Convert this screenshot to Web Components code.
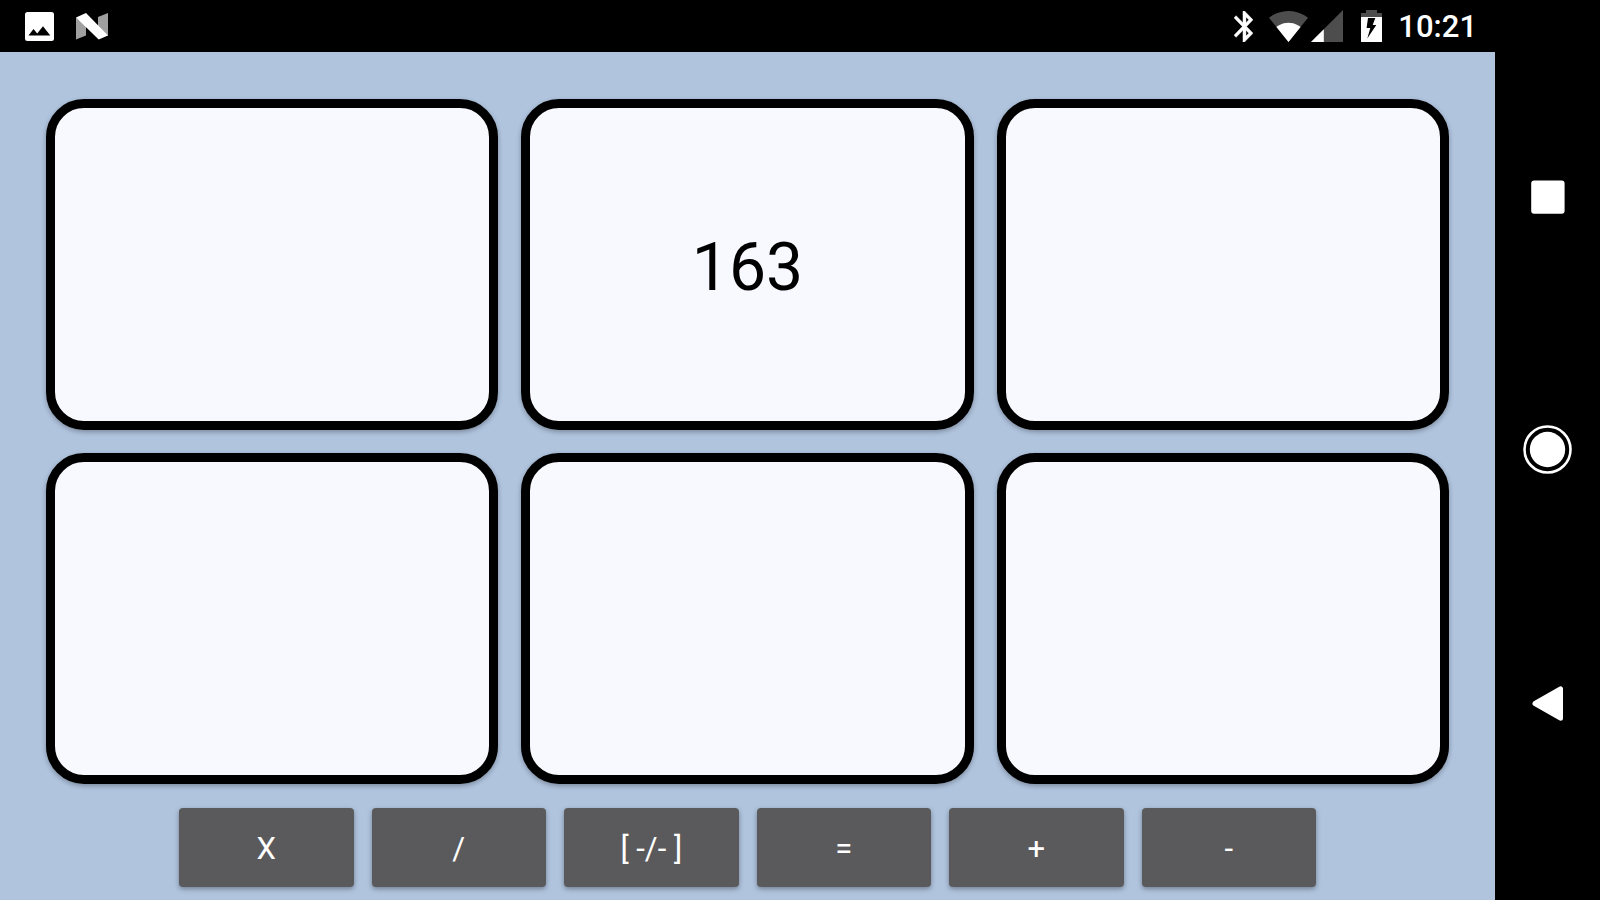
<!DOCTYPE html>
<html lang="en">
<head>
<meta charset="utf-8">
<meta name="viewport" content="width=device-width, initial-scale=1">
<title>Number tiles</title>
<style>
  body { margin: 0; background: #000; font-family: Roboto, "Liberation Sans", sans-serif; }
</style>
</head>
<body>
<device-screen>
  <status-bar slot="status" time="10:21"></status-bar>
  <tile-board slot="board">
    <number-tile></number-tile>
    <number-tile>163</number-tile>
    <number-tile></number-tile>
    <number-tile></number-tile>
    <number-tile></number-tile>
    <number-tile></number-tile>
  </tile-board>
  <operator-row slot="operators">
    <operator-key>X</operator-key>
    <operator-key>/</operator-key>
    <operator-key>[ -/- ]</operator-key>
    <operator-key>=</operator-key>
    <operator-key>+</operator-key>
    <operator-key>-</operator-key>
  </operator-row>
  <nav-rail slot="nav"></nav-rail>
</device-screen>

<script>
  class BaseElement extends HTMLElement {
    constructor() {
      super();
      const template = document.createElement('template');
      template.innerHTML = this.constructor.markup;
      this.attachShadow({ mode: 'open' }).append(template.content.cloneNode(true));
    }
  }

  class DeviceScreen extends BaseElement {
    static markup = `
      <style>
        :host { display: flex; min-height: 100vh; }
        main { flex: 1; min-width: 0; display: flex; flex-direction: column; background: #b0c4de; }
        .app { flex: 1; display: flex; flex-direction: column; gap: 24px; padding: 47px 0 13px; }
        slot[name="board"] { display: flex; flex: 1; flex-direction: column; }
      </style>
      <main>
        <slot name="status"></slot>
        <div class="app">
          <slot name="board"></slot>
          <slot name="operators"></slot>
        </div>
      </main>
      <slot name="nav"></slot>`;
  }

  class StatusBar extends BaseElement {
    static markup = `
      <style>
        :host { display: flex; align-items: center; justify-content: space-between; height: 52px;
          box-sizing: border-box; padding: 0 18px 0 25px; background: #000; color: #fff; }
        div { display: flex; align-items: center; }
        svg { display: block; fill: #fff; }
        .notices { gap: 22px; }
        .system { gap: 16px; }
        .radio { gap: 3px; margin-right: 2px; }
        .dim { fill: #4d4d4d; }
        time { padding-top: 2px; font-size: 31px; line-height: 40px; font-weight: 500; }
      </style>
      <div class="notices">
        <svg width="29" height="29" viewBox="0 0 29 29"><rect width="29" height="29" rx="2.5"/><path fill="#000" d="M3.5 23.5 8.5 17l3.7 4.4L18 14.3l7.3 9.2z"/></svg>
        <svg width="32" height="27" viewBox="0 0 32 27"><path fill="#a0a0a0" d="M0 4.5V26.5L10 22.5V12zM32 0 22 4v11l10 8z"/><path d="M0 4.5 10 0 32 22.5 22.7 26.5z"/></svg>
      </div>
      <div class="system">
        <svg width="19" height="31" viewBox="5 2 12.7 20" preserveAspectRatio="none"><path stroke="#fff" stroke-width=".3" d="M17.71 7.71 12 2h-1v7.59L6.41 5 5 6.41 10.59 12 5 17.59 6.41 19 11 14.41V22h1l5.71-5.71-4.3-4.29 4.3-4.29zM13 5.83l1.88 1.88L13 9.59V5.83zm1.88 10.46L13 18.17v-3.76l1.88 1.88z"/></svg>
        <div class="radio">
          <svg width="39" height="31" viewBox=".36 3 23.28 18.5"><path class="dim" d="M12.01 21.49 23.64 7c-.45-.34-4.93-4-11.64-4C5.28 3 .81 6.66.36 7l11.63 14.49.01.01z"/><path d="M4.79 12.52l7.2 8.98H12l.01-.01 7.2-8.98C18.85 12.24 16.1 10 12 10s-6.85 2.24-7.21 2.52z"/></svg>
          <svg width="32" height="32" viewBox="2 2 20 20"><path class="dim" d="M2 22h20V2z"/><path d="M2 22h8v-8z"/></svg>
        </div>
        <svg width="21" height="32" viewBox="0 0 21 32"><path class="dim" d="M5 0h11v3h5v5H0V3h5z"/><path d="M0 7h21v25H0z"/><path fill="#000" d="M7 8h7.3l-2.6 7H15.3L6.3 28.5 9.3 18H5.6z"/></svg>
        <time></time>
      </div>`;
    connectedCallback() {
      this.shadowRoot.querySelector('time').textContent = this.getAttribute('time');
    }
  }

  class TileBoard extends BaseElement {
    static markup = `
      <style>
        :host { flex: 1; display: grid; grid-template-columns: repeat(3, 1fr); grid-auto-rows: 1fr;
          gap: 23px; padding: 0 46px; }
      </style>
      <slot></slot>`;
  }

  class NumberTile extends BaseElement {
    static markup = `
      <style>
        :host { display: flex; min-width: 0; }
        button { flex: 1; margin: 0; padding: 7px 0 0; border: 9px solid #000; border-radius: 38px;
          background: #f8f8ff; color: #000; font: inherit; font-size: 66px; line-height: 76px;
          box-shadow: 0 2px 5px rgba(0, 0, 0, .3); }
      </style>
      <button type="button"><slot></slot></button>`;
  }

  class OperatorRow extends BaseElement {
    static markup = `
      <style>
        :host { display: grid; grid-template-columns: repeat(6, 1fr); gap: 18px; padding: 0 179px; }
      </style>
      <slot></slot>`;
  }

  class OperatorKey extends BaseElement {
    static markup = `
      <style>
        :host { display: flex; min-width: 0; height: 79px; }
        button { flex: 1; margin: 0; padding: 2px 0 0; border: 0; border-radius: 4px; background: #5a5a5c;
          color: #fff; font: inherit; font-size: 31px; line-height: 36px;
          box-shadow: 0 2px 5px rgba(0, 0, 0, .35); }
      </style>
      <button type="button"><slot></slot></button>`;
  }

  class NavRail extends BaseElement {
    static markup = `
      <style>
        :host { display: flex; width: 105px; background: #000; }
        nav { flex: 1; display: flex; flex-direction: column; padding: 70px 0; }
        button { flex: 1; display: flex; align-items: center; justify-content: center; margin: 0;
          padding: 0; border: 0; background: none; }
        svg { display: block; fill: #fff; }
      </style>
      <nav>
        <button type="button" aria-label="Overview"><svg width="49" height="49" viewBox="0 0 49 49"><rect x="8.2" y="8.4" width="33.4" height="33.4" rx="3"/></svg></button>
        <button type="button" aria-label="Home"><svg width="49" height="49" viewBox="0 0 49 49"><circle cx="24.5" cy="24.5" r="23" fill="none" stroke="#fff" stroke-width="2.6"/><circle cx="24.5" cy="24.5" r="17.7"/></svg></button>
        <button type="button" aria-label="Back"><svg width="49" height="49" viewBox="0 0 49 49"><path stroke="#fff" stroke-width="5" stroke-linejoin="round" d="M12 24.5 37.5 9.8v29.4z"/></svg></button>
      </nav>`;
  }

  customElements.define('device-screen', DeviceScreen);
  customElements.define('status-bar', StatusBar);
  customElements.define('tile-board', TileBoard);
  customElements.define('number-tile', NumberTile);
  customElements.define('operator-row', OperatorRow);
  customElements.define('operator-key', OperatorKey);
  customElements.define('nav-rail', NavRail);
</script>
</body>
</html>
